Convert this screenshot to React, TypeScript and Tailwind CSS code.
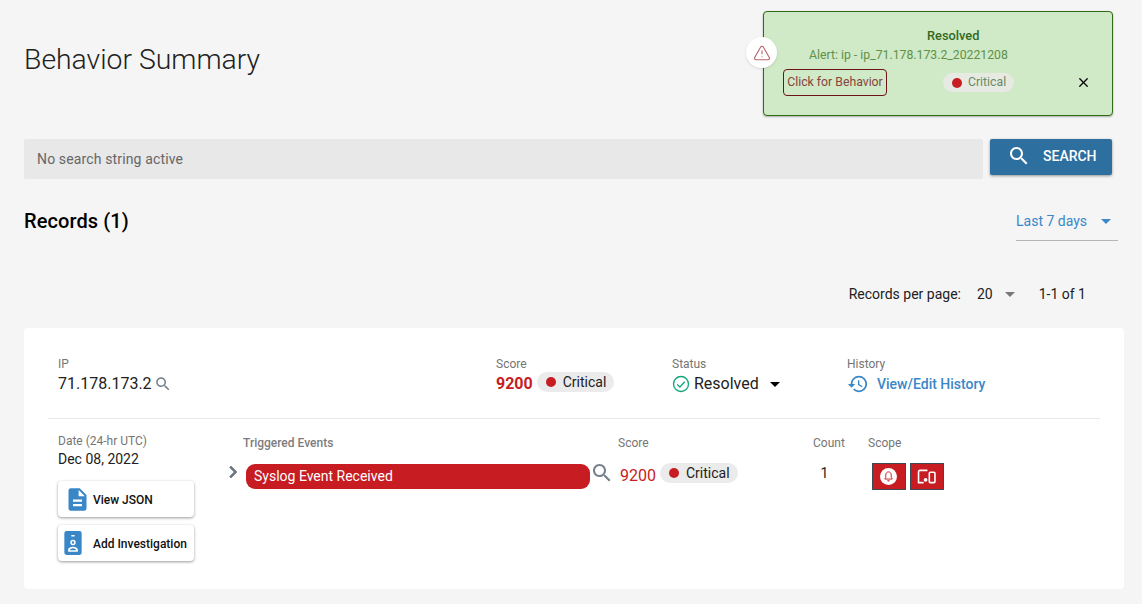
import { X, AlertTriangle } from "lucide-react";

function MuiSearch({ className }: { className?: string }) {
  return (
    <svg viewBox="0 0 24 24" className={className} fill="currentColor">
      <path d="M15.5 14h-.79l-.28-.27C15.41 12.59 16 11.11 16 9.5 16 5.91 13.09 3 9.5 3S3 5.91 3 9.5 5.91 16 9.5 16c1.61 0 3.09-.59 4.23-1.57l.27.28v.79l5 4.99L20.49 19l-4.99-5zm-6 0C7.01 14 5 11.99 5 9.5S7.01 5 9.5 5 14 7.01 14 9.5 11.99 14 9.5 14z" />
    </svg>
  );
}

function Caret({ className }: { className?: string }) {
  return (
    <svg viewBox="0 0 10 5" className={className} fill="currentColor">
      <path d="M0 0l5 5 5-5z" />
    </svg>
  );
}

function SeverityChip() {
  return (
    <span className="inline-flex items-center h-5 rounded-[10px] pl-[9px] pr-2 text-sm bg-[#ebebeb] text-[#212121]">
      <span className="w-[10px] h-[10px] rounded-full bg-[#c71c22] mr-[7px]" />
      Critical
    </span>
  );
}

function Label({ children }: { children: React.ReactNode }) {
  return <div className="text-xs leading-[14px] text-[#757575]">{children}</div>;
}

function ActionButton({ icon, label }: { icon: React.ReactNode; label: string }) {
  return (
    <button className="flex items-center h-9 w-[136px] bg-white rounded shadow-[0_1px_3px_rgba(0,0,0,0.4)] text-xs font-medium text-[#111]">
      <span className="w-[35px] flex justify-center pl-[3px]">{icon}</span>
      <span className="pt-[2px]">{label}</span>
    </button>
  );
}

export default function App() {
  return (
    <div className="relative h-[604px] w-[1142px] overflow-hidden bg-[#f5f5f5] pl-6 pr-[18px] font-['Roboto',sans-serif] text-[#212121]">
      {/* Toast */}
      <div className="absolute left-[763px] top-[11px] w-[350px] h-[105px] rounded border border-[#2f6b12] bg-[#d0e9c6] shadow-[0_1px_2px_rgba(0,0,0,0.3)]">
        <div className="absolute left-[-18px] top-[25px] w-[31px] h-[31px] rounded-full bg-white shadow flex items-center justify-center text-[#b8636b]">
          <AlertTriangle size={18} strokeWidth={1.5} />
        </div>
        <div className="mt-[16px] pl-[163px] text-[12.8px] leading-[16px] font-medium text-[#33691e]">Resolved</div>
        <div className="mt-[3px] pl-[45px] text-[12.25px] leading-[16px] text-[#5f9148]">
          Alert: ip - ip_71.178.173.2_20221208
        </div>
        <div className="flex items-center mt-[6px] pl-[19px]">
          <span className="h-[27px] w-[104px] flex items-center justify-center rounded border border-[#6f1414] text-[12.25px] text-[#86443c]">
            Click for Behavior
          </span>
          <span className="ml-[56px] inline-flex items-center h-[19px] w-[71px] rounded-[10px] bg-[#e6eae3] pl-[9px] text-[12.25px] text-[#6b8a60]">
            <span className="w-[10px] h-[10px] rounded-full bg-[#c71c22] mr-[6px]" />
            Critical
          </span>
          <X size={15} strokeWidth={2} className="ml-[62px] text-black" />
        </div>
      </div>

      <h1 className="pt-[42px] text-[28.35px] leading-[36px] font-light text-[#212121]">Behavior Summary</h1>

      {/* Search */}
      <div className="flex items-start mt-[61px] gap-[7px] pr-[12px]">
        <div className="flex-1 h-10 rounded-[2px] bg-[#e8e8e8] flex items-center pl-[13px] text-sm tracking-[0.14px] text-[#666]">
          No search string active
        </div>
        <button className="w-[122px] h-9 pb-[2px] rounded-[2px] bg-[#2d6f9f] text-white text-sm font-medium flex items-center pl-[18px] shadow-[0_1px_3px_rgba(0,0,0,0.4)]">
          <MuiSearch className="w-6 h-6 -ml-[1px]" />
          <span className="ml-[12px]">SEARCH</span>
        </button>
      </div>

      {/* Records heading */}
      <div className="flex items-start justify-between mt-[20px] pr-[6px]">
        <h2 className="text-xl leading-[44px] tracking-[0.1px] font-medium text-black">Records (1)</h2>
        <div className="w-[102px] h-[42px] pt-[3px] border-b border-[#b5b5b5] flex items-center justify-between pr-[7px] text-sm text-[#3a87c8]">
          Last 7 days
          <Caret className="w-[10px] h-[5px]" />
        </div>
      </div>

      {/* Pagination */}
      <div className="flex items-center justify-end h-5 mt-[41px] pr-[38px] text-sm text-[#212121]">
        <span>Records per page:</span>
        <span className="ml-4">20</span>
        <Caret className="w-[10px] h-[5px] ml-[12px] text-[#777]" />
        <span className="ml-[24px]">1-1 of 1</span>
      </div>

      {/* Record card */}
      <div className="mt-[24px] bg-white rounded h-[261px] px-6 pt-[29px]">
        <div className="flex h-[62px] pl-[10px] border-b border-[#e8e8e8]">
          <div className="w-[438px]">
            <Label>IP</Label>
            <div className="flex items-center h-[24px] mt-[1px] text-base">
              71.178.173.2
              <MuiSearch className="w-[18px] h-[18px] ml-[2px] text-[#757f8a]" />
            </div>
          </div>
          <div className="w-[176px]">
            <Label>Score</Label>
            <div className="flex items-center h-[24px] mt-[1px] text-base font-bold text-[#c71c22]">
              9200
              <span className="ml-1 -mt-1 font-normal"><SeverityChip /></span>
            </div>
          </div>
          <div className="w-[175px]">
            <Label>Status</Label>
            <div className="flex items-center h-[24px] mt-[1px] text-base">
              <svg viewBox="0 0 24 24" className="w-[18px] h-[18px] mr-[4px] text-[#12a67c]" fill="none" stroke="currentColor" strokeWidth="1.8">
                <circle cx="12" cy="12" r="10" />
                <path d="M7 12.5l3.5 3.5L17 9" />
              </svg>
              Resolved
              <Caret className="w-[10px] h-[5px] ml-[11px] text-black" />
            </div>
          </div>
          <div>
            <Label>History</Label>
            <div className="flex items-center h-[24px] mt-[1px] text-sm font-medium text-[#3a87c8]">
              <svg viewBox="0 0 24 24" className="w-[22px] h-[22px] mr-[8px]" fill="currentColor">
                <path d="M13 3a9 9 0 0 0-9 9H1l3.89 3.89.07.14L9 12H6c0-3.87 3.13-7 7-7s7 3.13 7 7-3.13 7-7 7c-1.93 0-3.68-.79-4.94-2.06l-1.42 1.42A8.954 8.954 0 0 0 13 21a9 9 0 0 0 0-18zm-1 5v5l4.28 2.54.72-1.21-3.5-2.08V8H12z" />
              </svg>
              View/Edit History
            </div>
          </div>
        </div>

        <div className="flex pl-[10px] pt-[15px]">
          <div className="w-[185px]">
            <Label>Date (24-hr UTC)</Label>
            <div className="text-sm leading-[20px] mt-[1px] text-[#212121]">Dec 08, 2022</div>
            <div className="flex flex-col gap-2 mt-[12px]">
              <ActionButton
                label="View JSON"
                icon={
                  <svg viewBox="0 0 24 24" className="w-[27px] h-[27px] text-[#3a87c8]" fill="currentColor">
                    <path d="M14 2H6c-1.1 0-2 .9-2 2v16c0 1.1.9 2 2 2h12c1.1 0 2-.9 2-2V8l-6-6zm2 16H8v-2h8v2zm0-4H8v-2h8v2zm-3-5V3.5L18.5 9H13z" />
                  </svg>
                }
              />
              <ActionButton
                label="Add Investigation"
                icon={
                  <svg viewBox="0 0 24 24" className="w-[26px] h-[26px] -ml-[8px] text-[#3a87c8]" fill="currentColor">
                    <path fillRule="evenodd" d="M6 1h12a2 2 0 0 1 2 2v18a2 2 0 0 1-2 2H6a2 2 0 0 1-2-2V3a2 2 0 0 1 2-2zm4.5 3.5V6h3V4.5h-3zM12 9a2.5 2.5 0 1 0 0 5 2.5 2.5 0 0 0 0-5zm0 1.4a1.1 1.1 0 1 1 0 2.2 1.1 1.1 0 0 1 0-2.2zM7.5 20h9v-1.5c0-2-2.5-3-4.5-3s-4.5 1-4.5 3V20zm1.5-1.4c.3-.9 1.8-1.7 3-1.7s2.7.8 3 1.7H9z" />
                  </svg>
                }
              />
            </div>
          </div>

          <div className="flex-1">
            <div className="flex text-xs leading-[14px] text-[#757575] pt-[2px]">
              <div className="w-[375px] font-medium text-[#7d7d7d]">Triggered Events</div>
              <div className="w-[195px]">Score</div>
              <div className="w-[55px]">Count</div>
              <div>Scope</div>
            </div>
            <div className="flex items-center mt-[14px] h-[25px]">
              <svg viewBox="0 0 24 24" className="w-6 h-6 -ml-[22px] -mt-[10px] text-[#6b7683]" fill="currentColor" stroke="currentColor" strokeWidth="0.7">
                <path d="M10 6 8.59 7.41 13.17 12l-4.58 4.59L10 18l6-6z" />
              </svg>
              <div className="w-[344px] h-[25px] ml-[1px] pb-[2px] rounded-[9px] bg-[#c71c22] text-white text-sm flex items-center pl-2">
                Syslog Event Received
              </div>
              <MuiSearch className="w-6 h-6 -mt-[7px] text-[#757f8a]" />
              <span className="ml-[6px] -mt-[2px] text-base text-[#c71c22]">9200</span>
              <span className="ml-1 -mt-[8px]"><SeverityChip /></span>
              <span className="ml-[83px] text-sm w-[51px] -mt-[8px]">1</span>
              <div className="flex gap-1">
                <div className="w-[34px] h-[27px] bg-[#c71c22] border border-[#3d4852] flex items-center justify-center">
                  <svg viewBox="0 0 20 20" className="w-[17px] h-[17px]">
                    <circle cx="10" cy="10" r="10" fill="#fff" />
                    <path d="M10 4.6c-2.1 0-3.2 1.6-3.2 3.6v2.8L5.6 13h8.8l-1.200-2V8.200c0-2-1.100-3.600-3.200-3.600z" fill="#fff" stroke="#c71c22" strokeWidth="1.1" />
                    <path d="M8.5 14.500a1.500 1.500 0 0 0 3 0z" fill="#c71c22" />
                  </svg>
                </div>
                <div className="w-[34px] h-[27px] bg-[#c71c22] border border-[#3d4852] flex items-center justify-center">
                  <svg viewBox="0 0 20 16" className="w-[19px] h-[15px]" fill="none" stroke="#fff" strokeWidth="1.7">
                    <path d="M11 1.5H3A1.5 1.5 0 0 0 1.5 3v11.5H7" />
                    <rect x="13" y="3.5" width="6" height="11" rx="1" />
                    <circle cx="9" cy="11.5" r="2" fill="#fff" stroke="none" />
                  </svg>
                </div>
              </div>
            </div>
          </div>
        </div>
      </div>
    </div>
  );
}
